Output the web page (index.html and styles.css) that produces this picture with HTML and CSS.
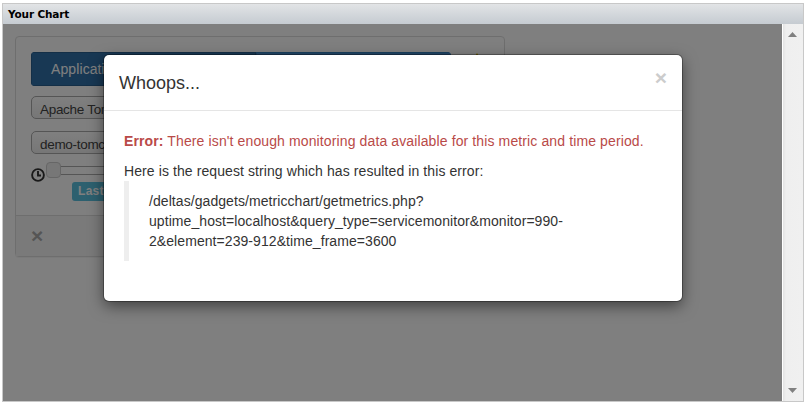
FILE: index.html
```html
<!DOCTYPE html>
<html lang="en">
<head>
<meta charset="utf-8">
<title>Your Chart</title>
<link rel="stylesheet" href="styles.css">
</head>
<body>
<div class="gadget">
  <header class="gadget-title">Your Chart</header>
  <div class="gadget-body">
    <main class="viewport">
      <section class="panel">
        <div class="panel-body">
          <div class="toolbar">
            <div class="btn-group"><div class="btn active">Applications</div><div class="btn"></div></div>
            <svg class="bolt" width="6" height="12" viewBox="0 0 6 12"><path d="M3 0L6 5H4v7H2V5H0z"/></svg>
          </div>
          <div class="select first">Apache Tomcat</div>
          <div class="select">demo-tomcat</div>
          <div class="slider-row">
            <svg class="clock" width="14" height="14" viewBox="0 0 14 14"><circle cx="7" cy="7" r="5.9"/><path d="M7 3v4.500h3"/></svg>
            <div class="slider"><div class="handle"></div><div class="track"></div></div>
          </div>
          <span class="label">Last hour</span>
        </div>
        <footer class="panel-footer">×</footer>
      </section>
      <div class="backdrop"></div>
    </main>
    <aside class="scrollbar">
      <svg width="9" height="5" viewBox="0 0 9 5"><path d="M4.500 0L9 5H0z"/></svg>
      <svg width="9" height="5" viewBox="0 0 9 5"><path d="M0 0h9L4.500 5z"/></svg>
    </aside>
  </div>
</div>
<div class="modal">
  <div class="modal-header"><h4>Whoops...</h4><span class="close">×</span></div>
  <div class="modal-body">
    <p class="error"><strong>Error:</strong> There isn't enough monitoring data available for this metric and time period.</p>
    <p class="intro">Here is the request string which has resulted in this error:</p>
    <blockquote>/deltas/gadgets/metricchart/getmetrics.php?<br>uptime_host=localhost&amp;query_type=servicemonitor&amp;monitor=990-<br>2&amp;element=239-912&amp;time_frame=3600</blockquote>
  </div>
</div>
</body>
</html>
```
FILE: styles.css
```css
* { box-sizing: border-box; }
body { margin: 0; padding: 3px 3px 2px 2px; height: 404px; overflow: hidden; background: #fff; font: 14px/20px "Liberation Sans", Arial, sans-serif; color: #333; }
.gadget { height: 399px; border: 1px solid #c8c8c8; display: flex; flex-direction: column; }
.gadget-title { height: 20px; background: linear-gradient(#e2e4e6, #c5cbd1); color: #000; font: bold 10.5px/20px "DejaVu Sans", Verdana, sans-serif; letter-spacing: -.15px; padding-left: 5px; }
.gadget-body { flex: 1; display: flex; }
.viewport { position: relative; flex: 1; padding: 12px; background: #fff; overflow: hidden; }
.backdrop { position: absolute; inset: 0; background: rgba(0,0,0,.5); }
.panel { width: 490px; height: 221px; border: 1px solid #ddd; border-radius: 4px; background: #fff; box-shadow: 0 1px 1px rgba(0,0,0,.05); }
.panel-body { height: 178px; padding: 15px; }
.toolbar { display: flex; gap: 23px; }
.bolt { margin-top: 1px; fill: #d8b800; }
.btn-group { display: flex; width: 420px; height: 34px; border-radius: 4px; overflow: hidden; }
.btn { flex: 1; background: #428bca; border: 1px solid #357ebd; color: #fff; }
.btn.active { flex: 0 0 225px; padding: 6px 19px; background: #3071a9; border-color: #285e8e; letter-spacing: .1px; }
.select { width: 420px; height: 23px; margin-top: 12px; padding: 1px 8px; border: 1px solid #aaa; border-radius: 5px; background: linear-gradient(#fff, #eee); color: #444; font-size: 13.5px; letter-spacing: -.3px; line-height: 23px; }
.select.first { margin-top: 10px; }
.slider-row { display: flex; align-items: flex-start; height: 27px; padding-top: 7px; }
.clock { margin-top: 7px; fill: none; stroke: #333; stroke-width: 1.9; }
.slider { display: flex; flex: 1; align-items: center; height: 18px; margin-left: 1px; }
.handle { width: 15px; height: 16px; border: 1px solid #ccc; border-radius: 4px; background: #eee; }
.track { flex: 1; height: 9px; border: 1px solid #aaa; border-left: 0; }
.label { display: block; width: 72px; height: 19px; margin: 1px 0 0 41px; padding: 0 6px; border-radius: 3px; background: #5bc0de; color: #fff; font-weight: bold; font-size: 12px; line-height: 19px; white-space: nowrap; letter-spacing: .3px; }
.panel-footer { height: 41px; border-top: 1px solid #ddd; background: #f5f5f5; padding: 10px 15px; font-size: 21px; font-weight: bold; color: #aaa; }
.scrollbar { width: 21px; border-left: 1px solid #fff; background: linear-gradient(90deg, #e3e3e3, #efefef 3px, #f0f0f0); display: flex; flex-direction: column; justify-content: space-between; align-items: center; padding: 8px 1px 8px 0; fill: #808080; }
.modal { position: absolute; left: 104px; top: 55px; width: 578px; height: 246px; border-radius: 5px; background: #fff; box-shadow: 0 0 0 1px rgba(0,0,0,.3), 0 5px 15px rgba(0,0,0,.5); }
.modal-header { display: flex; justify-content: space-between; height: 56px; border-bottom: 1px solid #e5e5e5; padding: 15px 15px 0; }
h4 { margin: 0; font-size: 18px; font-weight: normal; line-height: 26px; }
.close { color: #ccc; font-size: 21px; line-height: 15px; font-weight: bold; }
.modal-body { padding: 20px; letter-spacing: .09px; }
p { margin: 0 0 10px; }
.error { color: #b94a48; letter-spacing: .118px; }
.intro { margin-bottom: 0; }
blockquote { margin: 0; padding: 10px 20px; border-left: 5px solid #eee; letter-spacing: .07px; }
```
